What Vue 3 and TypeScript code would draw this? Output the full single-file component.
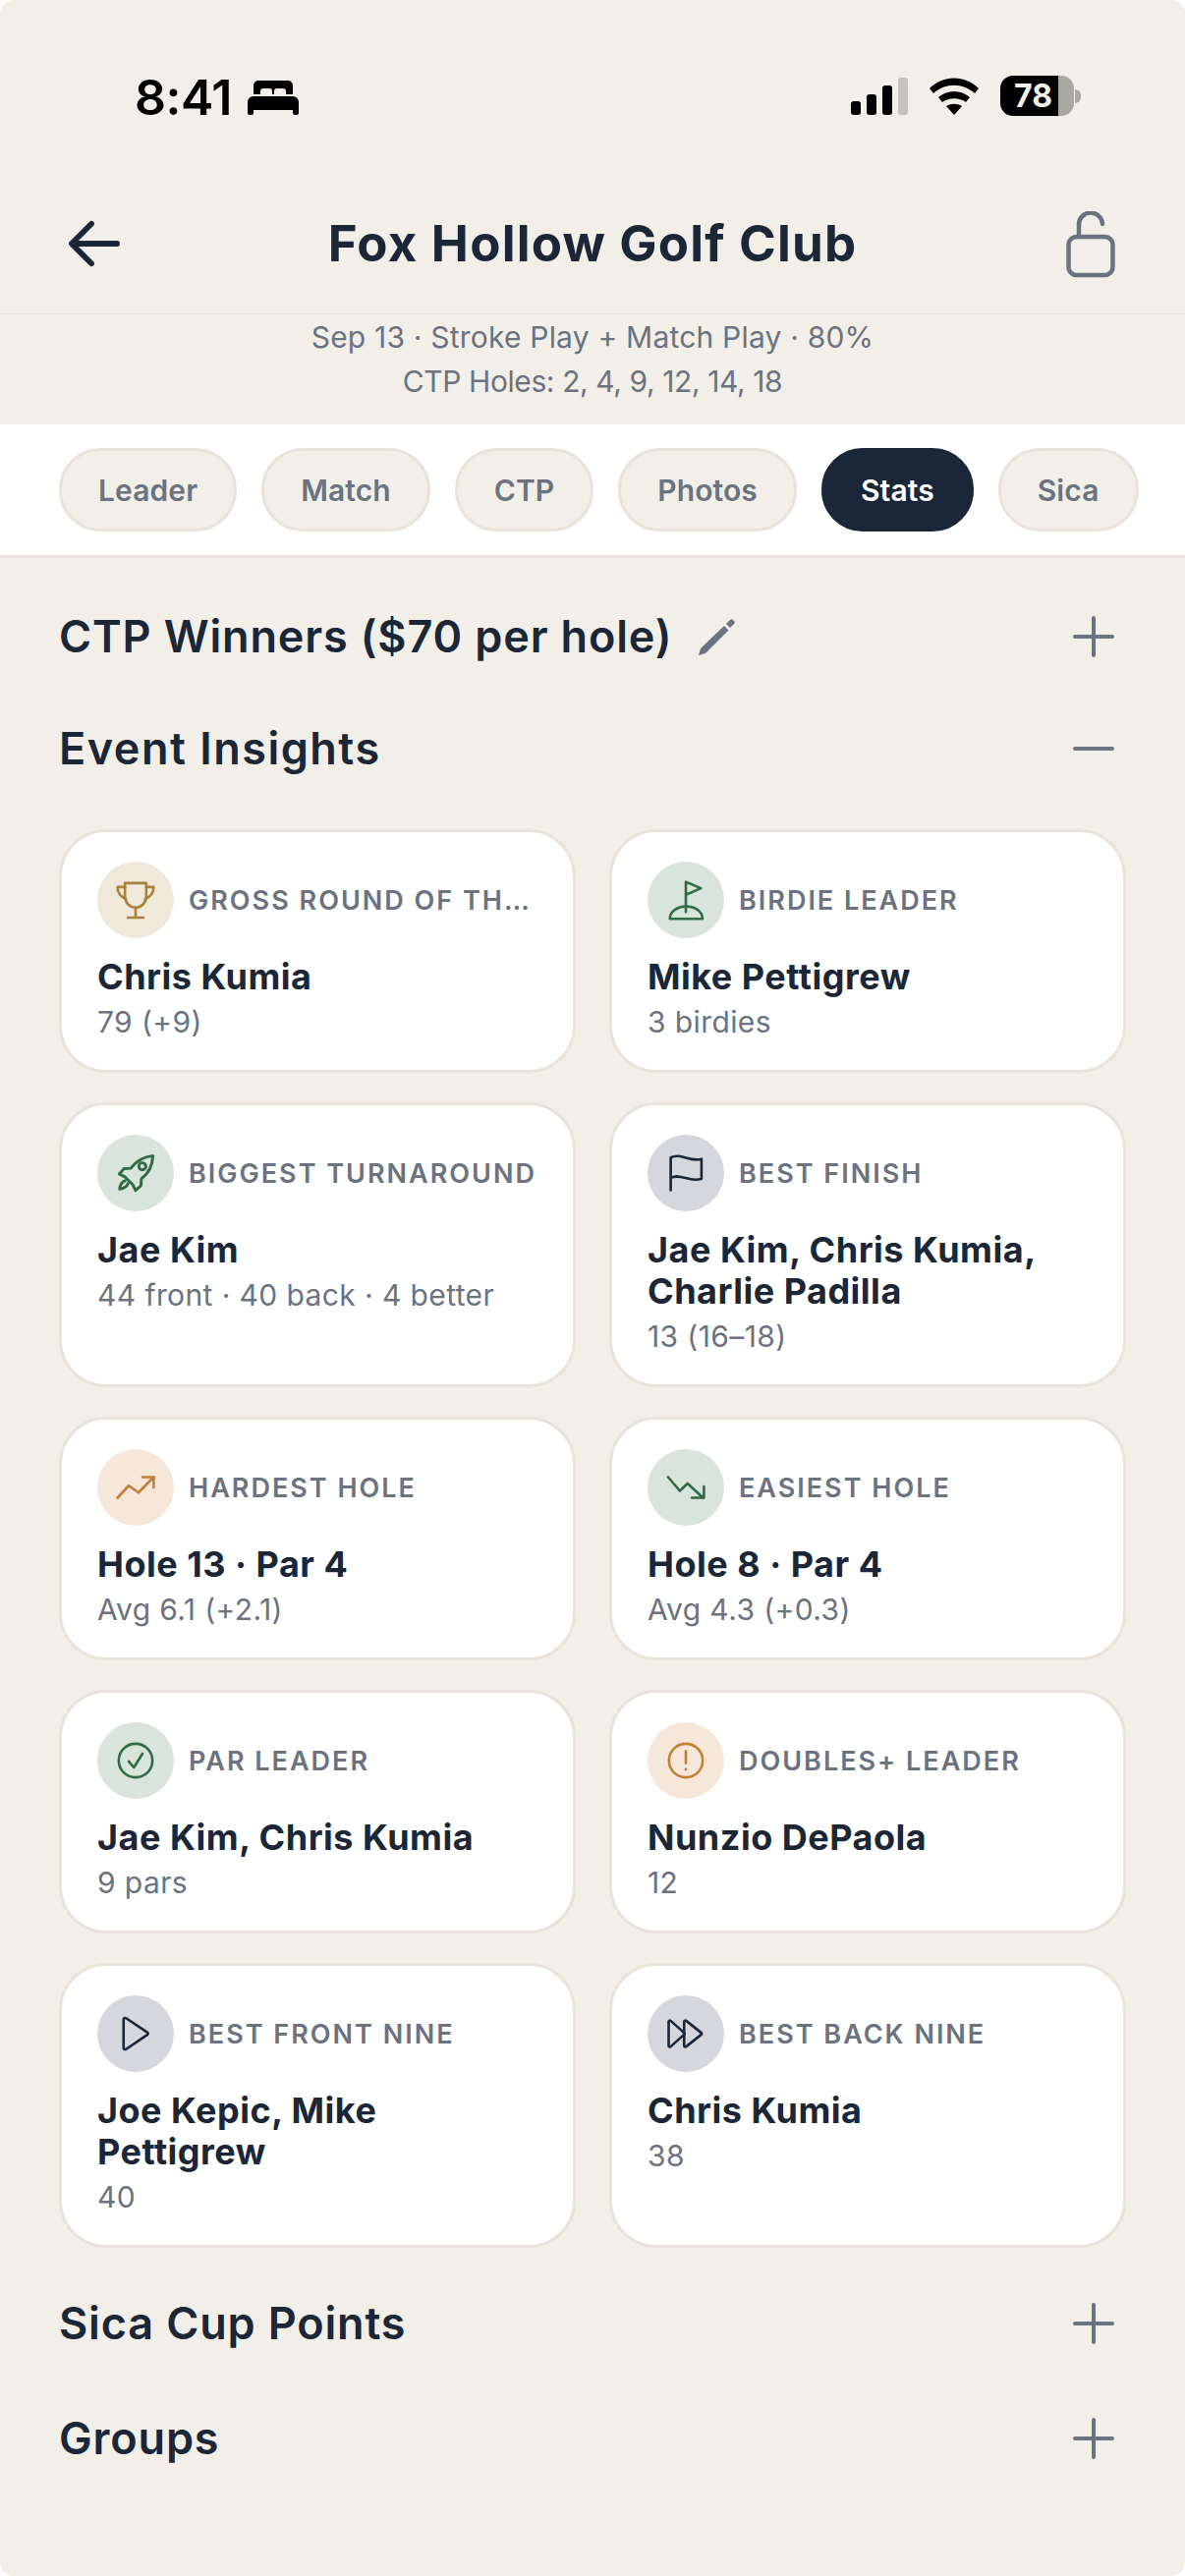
<script setup lang="ts">
interface Insight {
  icon: string
  tone: string
  label: string
  name: string
  sub: string
}
const tabs: string[] = ['Leader', 'Match', 'CTP', 'Photos', 'Stats', 'Sica']
const rows: Insight[] = [
  { icon: 'trophy', tone: 'gold', label: 'GROSS ROUND OF THE DAY', name: 'Chris Kumia', sub: '79 (+9)' },
  { icon: 'golf', tone: 'green', label: 'BIRDIE LEADER', name: 'Mike Pettigrew', sub: '3 birdies' },
  { icon: 'rocket', tone: 'green', label: 'BIGGEST TURNAROUND', name: 'Jae Kim', sub: '44 front · 40 back · 4 better' },
  { icon: 'flag', tone: 'navy', label: 'BEST FINISH', name: 'Jae Kim, Chris Kumia, Charlie Padilla', sub: '13 (16–18)' },
  { icon: 'up', tone: 'orange', label: 'HARDEST HOLE', name: 'Hole 13 · Par 4', sub: 'Avg 6.1 (+2.1)' },
  { icon: 'down', tone: 'green', label: 'EASIEST HOLE', name: 'Hole 8 · Par 4', sub: 'Avg 4.3 (+0.3)' },
  { icon: 'check', tone: 'green', label: 'PAR LEADER', name: 'Jae Kim, Chris Kumia', sub: '9 pars' },
  { icon: 'alert', tone: 'orange', label: 'DOUBLES+ LEADER', name: 'Nunzio DePaola', sub: '12' },
  { icon: 'play', tone: 'navy', label: 'BEST FRONT NINE', name: 'Joe Kepic, Mike Pettigrew', sub: '40' },
  { icon: 'forward', tone: 'navy', label: 'BEST BACK NINE', name: 'Chris Kumia', sub: '38' },
]
</script>

<template>
  <div class="page">
    <div class="status">
      <div class="status-left">
        <span class="time">8:41</span>
        <svg class="bed" viewBox="0 0 52 36" width="52" height="36"><path fill="#000" d="M6 15V6a5 5 0 0 1 5-5h30a5 5 0 0 1 5 5v9h-7v-3c0-2-1-3-3-3h-6c-2 0-3 1-3 3v3h-2v-3c0-2-1-3-3-3h-6c-2 0-3 1-3 3v3H6Z"/><path fill="#000" d="M0 23a6 6 0 0 1 6-6h40a6 6 0 0 1 6 6v11a2 2 0 0 1-2 2h-2a2 2 0 0 1-2-2v-3H6v3a2 2 0 0 1-2 2H2a2 2 0 0 1-2-2V23Z"/></svg>
      </div>
      <div class="status-right">
        <svg viewBox="0 0 58 38" width="58" height="38"><rect x="0" y="24" width="10" height="14" rx="3" fill="#000"/><rect x="16" y="17" width="10" height="21" rx="3" fill="#000"/><rect x="32" y="8" width="10" height="30" rx="3" fill="#000"/><rect x="48" y="0" width="10" height="38" rx="3" fill="#c3c2bc"/></svg>
        <svg viewBox="0 0 50 38" width="50" height="38"><path fill="#000" d="M0 11C14-3 36-3 50 11l-4 5C34 5 16 5 4 16Z"/><path fill="#000" d="M9 20c9-8 23-8 32 0l-4 5c-7-5-17-5-24 0Z"/><path fill="#000" d="M17 29c5-3 11-3 16 0l-8 9Z"/></svg>
        <div class="battery">
          <div class="batt-body"><span class="batt-text">78</span></div>
          <div class="batt-cap"></div>
        </div>
      </div>
    </div>

    <header class="nav">
      <svg class="back" viewBox="0 0 54 48" width="52" height="48" fill="none" stroke="#1b2636" stroke-width="6" stroke-linecap="round" stroke-linejoin="round"><path d="M51 24H4M24 3 3 24l21 21"/></svg>
      <h1 class="title">Fox Hollow Golf Club</h1>
      <svg class="lock" viewBox="0 0 50 68" width="50" height="68" fill="none" stroke="#6b7280" stroke-width="4.5" stroke-linecap="round"><rect x="2.5" y="26" width="45" height="39" rx="8"/><path d="M13 25V14a12 12 0 0 1 24-1"/></svg>
    </header>

    <div class="meta">
      <div class="meta-a">Sep 13 · Stroke Play + Match Play · 80%</div>
      <div class="meta-b">CTP Holes: 2, 4, 9, 12, 14, 18</div>
    </div>

    <nav class="tabs">
      <span v-for="t in tabs" :key="t" class="pill" :class="{ active: t === 'Stats' }">{{ t }}</span>
    </nav>

    <section class="sec first">
      <div class="sec-left">
        <h2>CTP Winners ($70 per hole)</h2>
        <svg class="pencil" viewBox="0 0 40 40" width="40" height="40"><path fill="#6b7280" d="M1 39l2-7L27 9l4.500 4.500L8 37ZM29 7l4-4c1-1 2-1 3 0l1 1c1 1 1 2 0 3l-4 4Z"/></svg>
      </div>
      <svg class="toggle" viewBox="0 0 42 42" width="42" height="42" stroke="#6b7280" stroke-width="4" stroke-linecap="round"><path d="M21 2v38M2 21h38"/></svg>
    </section>

    <section class="sec second">
      <h2>Event Insights</h2>
      <svg class="toggle" viewBox="0 0 42 42" width="42" height="42" stroke="#6b7280" stroke-width="4" stroke-linecap="round"><path d="M2 21h38"/></svg>
    </section>

    <div class="grid">
      <article v-for="r in rows" :key="r.label" class="card">
        <div class="head">
          <div class="ico" :class="r.tone">
            <svg viewBox="0 0 24 24" width="42" height="42" fill="none" stroke="currentColor" stroke-width="1.5" stroke-linecap="round" stroke-linejoin="round">
              <template v-if="r.icon === 'trophy'">
                <path d="M5.8 2.2h12.400v8a6.200 6.200 0 0 1-12.400 0Z"/><path d="M5.800 4.500H1.500c0 3.200 1.500 5.500 5 7M18.200 4.500h4.300c0 3.200-1.500 5.500-5 7M12 16.500v5.800M7.500 22.300h9"/>
              </template>
              <template v-else-if="r.icon === 'golf'">
                <path d="M12 19V1.500l8.800 3.700L12 9"/><path d="M2.700 23c0-4 4-7.200 9.500-7.200s9.500 3.200 9.500 7.200Z"/>
              </template>
              <template v-else-if="r.icon === 'rocket'">
                <g transform="translate(12 12) scale(1.12) translate(-12 -12)">
                  <path d="M21 3c-5 .5-8.500 2.500-11.500 6.500L6 9.700 3.500 12.500l3 1.500 4 4 1.500 3 2.800-2.500.2-3.500C19 12 20.800 8 21 3Z"/><circle cx="15.500" cy="8.500" r="1.800"/><path d="M6.500 16c-1.500.5-2.500 2-2.800 4.300 2.300-.3 3.800-1.300 4.300-2.800"/>
                </g>
              </template>
              <template v-else-if="r.icon === 'flag'">
                <path d="M3.200 22V3c6-3 11 3 17.900.8v11.500c-7 2.500-12-3.500-17.900-.5"/>
              </template>
              <template v-else-if="r.icon === 'up'">
                <path d="M1.500 18 8 11l5.700 4L22.500 6"/><path d="M16 6h6.500v6"/>
              </template>
              <template v-else-if="r.icon === 'down'">
                <path d="M1.700 6 8.500 14l4.500-4.300L22 18"/><path d="M22.500 11.500V18h-7"/>
              </template>
              <template v-else-if="r.icon === 'check'">
                <circle cx="12" cy="12" r="9.800"/><path d="M8 12.500l3 3.500 5-8"/>
              </template>
              <template v-else-if="r.icon === 'alert'">
                <circle cx="12" cy="12" r="9.800"/><path d="M12 6.500v7M12 17v.2"/>
              </template>
              <template v-else-if="r.icon === 'play'">
                <path d="M5 3.500v17a1 1 0 0 0 1.500.5L19 12.500a.8.8 0 0 0 0-1.100L6.500 3a1 1 0 0 0-1.500.5Z"/>
              </template>
              <template v-else>
                <path d="M2 5v14a.7.7 0 0 0 1.200.5L11 12.500a.7.7 0 0 0 0-1L3.200 4.500A.7.7 0 0 0 2 5Z"/><path d="M11 5v14a.7.7 0 0 0 1.200.5L21 12.500a.7.7 0 0 0 0-1L12.200 4.500A.7.7 0 0 0 11 5Z"/>
              </template>
            </svg>
          </div>
          <span class="label">{{ r.label }}</span>
        </div>
        <div class="name">{{ r.name }}</div>
        <div class="sub">{{ r.sub }}</div>
      </article>
    </div>

    <section class="sec third">
      <h2>Sica Cup Points</h2>
      <svg class="toggle" viewBox="0 0 42 42" width="42" height="42" stroke="#6b7280" stroke-width="4" stroke-linecap="round"><path d="M21 2v38M2 21h38"/></svg>
    </section>
    <section class="sec fourth">
      <h2>Groups</h2>
      <svg class="toggle" viewBox="0 0 42 42" width="42" height="42" stroke="#6b7280" stroke-width="4" stroke-linecap="round"><path d="M21 2v38M2 21h38"/></svg>
    </section>
  </div>
</template>

<style scoped>
.page {
  width: 1206px;
  height: 2622px;
  background: #f2efe9;
  font-family: Inter, "Noto Sans", sans-serif;
  color: #1b2636;
  overflow: hidden;
  box-sizing: border-box;
  border-radius: 14px;
}
.status {
  height: 192px;
  box-sizing: border-box;
  padding: 72px 106px 0 137px;
  display: flex;
  justify-content: space-between;
  align-items: flex-start;
}
.status-left { display: flex; align-items: center; gap: 16px; }
.time { font-size: 50px; line-height: 54px; font-weight: 600; color: #000; letter-spacing: -0.5px; }
.status-right { display: flex; align-items: center; gap: 22px; margin-top: 5px; }
.battery { display: flex; align-items: center; gap: 1px; }
.batt-body {
  width: 75px; height: 41px; border-radius: 13px;
  background: linear-gradient(90deg, #000 0 59px, #a9a8a2 59px);
  display: flex; align-items: center; padding-left: 14px; box-sizing: border-box;
}
.batt-text { color: #f2efe9; font-size: 32px; font-weight: 700; line-height: 1; }
.batt-cap { width: 6px; height: 14px; background: #a9a8a2; border-radius: 0 6px 6px 0; }
.nav {
  height: 128px;
  box-sizing: border-box;
  border-bottom: 1px solid #e6e3da;
  padding: 0 71px 0 70px;
  display: flex;
  align-items: center;
  justify-content: space-between;
  position: relative;
}
.title {
  position: absolute; left: 0; right: 0; top: 26px; margin: 0;
  text-align: center;
  font-size: 51px; line-height: 60px; font-weight: 700; letter-spacing: 1.2px;
  color: #1b2636;
}
.back { margin-top: -16px; }
.lock { margin-top: -14px; }
.meta {
  height: 112px; box-sizing: border-box; padding-top: 1px;
  text-align: center; font-size: 30px; line-height: 45px; color: #6b7280;
}
.meta-a { letter-spacing: 0.2px; }
.meta-b { letter-spacing: -0.4px; }
.tabs {
  height: 136px; box-sizing: border-box;
  background: #fff;
  border-bottom: 3px solid #e8e4d9;
  padding: 24px 48px 0 60px;
  display: flex; gap: 25px; align-items: flex-start;
}
.pill {
  height: 85px; box-sizing: border-box;
  border: 3px solid #e8e4d9;
  border-radius: 42px;
  background: #f2efe9;
  color: #6b7280;
  font-size: 30px; font-weight: 600;
  letter-spacing: 0.1px;
  display: flex; align-items: center;
  padding: 0 37px;
}
.pill.active { background: #1b2638; border-color: #1b2638; color: #fff; }
.sec {
  padding: 0 60px;
  display: flex; align-items: center; justify-content: space-between;
}
.sec h2 { margin: 0; font-size: 45px; line-height: 60px; font-weight: 600; color: #1b2636; letter-spacing: 0.85px; }
.sec.second h2 { letter-spacing: 1.5px; }
.sec-left { display: flex; align-items: center; gap: 26px; }
.first { margin-top: 50px; }
.second { margin-top: 54px; }
.third { margin-top: 47px; }
.fourth { margin-top: 57px; }
.toggle { margin-right: 12px; }
.grid {
  margin-top: 52px;
  padding: 0 60px;
  display: grid;
  grid-template-columns: 1fr 1fr;
  gap: 30px 34px;
}
.card {
  background: #fff;
  border: 3px solid #e8e4d9;
  border-radius: 48px;
  padding: 30px 36px 28px;
  box-sizing: border-box;
  min-width: 0;
}
.head { display: flex; align-items: center; gap: 15px; min-width: 0; }
.ico {
  width: 78px; height: 78px; border-radius: 50%;
  flex: none;
  display: flex; align-items: center; justify-content: center;
}
.gold { background: #efe9dc; color: #a9813a; }
.green { background: #d9e4dc; color: #2f6b45; }
.navy { background: #d5d7dc; color: #1b2638; }
.orange { background: #f5e8da; color: #c47f35; }
.label {
  font-size: 27px; font-weight: 600; color: #6b7280; letter-spacing: 2px;
  white-space: nowrap; overflow: hidden; text-overflow: ellipsis; min-width: 0;
}
.name { margin-top: 18px; font-size: 36px; line-height: 42px; font-weight: 700; color: #1b2636; letter-spacing: 0.5px; }
.sub { margin-top: 4px; font-size: 30px; line-height: 42px; color: #6b7280; letter-spacing: 0.4px; }
</style>

<style>
html, body { margin: 0; background: #fff; }
</style>
